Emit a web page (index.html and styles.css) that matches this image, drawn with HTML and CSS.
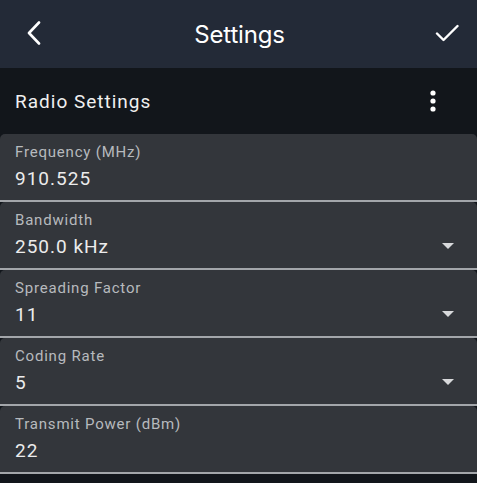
FILE: index.html
```html
<!DOCTYPE html>
<html lang="en">
<head>
    <meta charset="UTF-8">
    <meta name="viewport" content="width=device-width, initial-scale=1.0">
    <title>Settings</title>
    <link rel="stylesheet" href="styles.css">
</head>
<body>

<!-- Top bar -->
<div class="app-bar">
    <svg class="back-icon" width="16" height="24" viewBox="0 0 16 24">
        <path d="M13 1.5 L3 12 L13 22.5" fill="none" stroke="#fff" stroke-width="2.6" stroke-linecap="round" stroke-linejoin="round"/>
    </svg>
    <h1 class="title">Settings</h1>
    <svg class="check-icon" width="24" height="18" viewBox="0 0 24 18">
        <path d="M2 9.5 L8.5 16 L22.5 2" fill="none" stroke="#fff" stroke-width="2.4" stroke-linecap="round" stroke-linejoin="round"/>
    </svg>
</div>

<!-- Section header -->
<div class="section-head">
    <span class="section-title">Radio Settings</span>
    <svg class="more-icon" width="6" height="22" viewBox="0 0 6 22">
        <circle cx="3" cy="3" r="2.6" fill="#fff"/>
        <circle cx="3" cy="11" r="2.6" fill="#fff"/>
        <circle cx="3" cy="19" r="2.6" fill="#fff"/>
    </svg>
</div>

<!-- Fields -->
<div class="fields">
    <div class="field">
        <div class="field-label">Frequency (MHz)</div>
        <div class="field-value">910.525</div>
    </div>
    <div class="field select">
        <div class="field-label">Bandwidth</div>
        <div class="field-value">250.0 kHz</div>
        <span class="caret"></span>
    </div>
    <div class="field select">
        <div class="field-label">Spreading Factor</div>
        <div class="field-value">11</div>
        <span class="caret"></span>
    </div>
    <div class="field select">
        <div class="field-label">Coding Rate</div>
        <div class="field-value">5</div>
        <span class="caret"></span>
    </div>
    <div class="field">
        <div class="field-label">Transmit Power (dBm)</div>
        <div class="field-value">22</div>
    </div>
</div>

</body>
</html>
```

FILE: styles.css
```css
body {
    margin: 0;
    background-color: #12161b;
    font-family: Roboto, "Liberation Sans", sans-serif;
    color: #fff;
    overflow: hidden;
}

.app-bar {
    height: 68px;
    background-color: #232a37;
    display: flex;
    align-items: center;
    justify-content: space-between;
    padding: 0 18px 0 26px;
}

.back-icon {
    margin-top: -2px;
}

.title {
    margin: 0;
    font-family: Inter, Roboto, sans-serif;
    font-weight: 400;
    font-size: 24px;
    letter-spacing: -0.2px;
    color: #fff;
    padding-left: 2px;
}

.check-icon {
    margin-top: -2px;
}

.section-head {
    height: 66px;
    display: flex;
    align-items: center;
    justify-content: space-between;
    padding: 0 41px 0 15px;
}

.section-title {
    font-size: 19px;
    letter-spacing: 1px;
    color: #f0f0f0;
}

.fields {
    display: flex;
    flex-direction: column;
}

.field {
    position: relative;
    height: 68px;
    box-sizing: border-box;
    background-color: #33363b;
    border-bottom: 2px solid #a3a6aa;
    border-radius: 5px 5px 0 0;
    padding: 8px 15px 0;
}

.field-label {
    font-size: 15px;
    line-height: 20px;
    letter-spacing: 0.8px;
    color: #b7babe;
}

.field-value {
    margin-top: 3px;
    font-size: 19px;
    line-height: 28px;
    letter-spacing: 1px;
    color: #ececec;
}

.caret {
    position: absolute;
    right: 23px;
    top: 41px;
    width: 0;
    height: 0;
    border-left: 6px solid transparent;
    border-right: 6px solid transparent;
    border-top: 6px solid #d8d9db;
}
```
